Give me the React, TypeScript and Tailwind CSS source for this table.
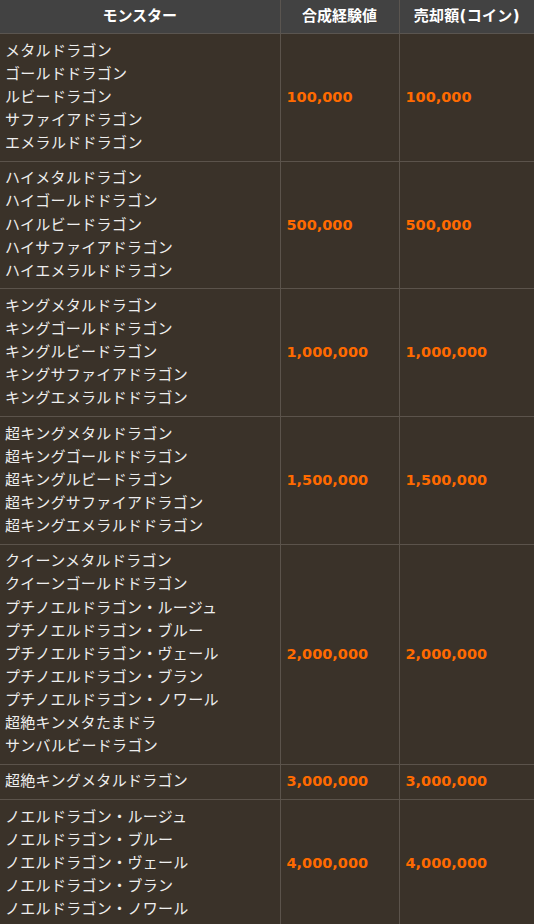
const rows: { names: string[]; exp: string; coin: string }[] = [
  {
    names: ['メタルドラゴン', 'ゴールドドラゴン', 'ルビードラゴン', 'サファイアドラゴン', 'エメラルドドラゴン'],
    exp: '100,000',
    coin: '100,000',
  },
  {
    names: ['ハイメタルドラゴン', 'ハイゴールドドラゴン', 'ハイルビードラゴン', 'ハイサファイアドラゴン', 'ハイエメラルドドラゴン'],
    exp: '500,000',
    coin: '500,000',
  },
  {
    names: ['キングメタルドラゴン', 'キングゴールドドラゴン', 'キングルビードラゴン', 'キングサファイアドラゴン', 'キングエメラルドドラゴン'],
    exp: '1,000,000',
    coin: '1,000,000',
  },
  {
    names: ['超キングメタルドラゴン', '超キングゴールドドラゴン', '超キングルビードラゴン', '超キングサファイアドラゴン', '超キングエメラルドドラゴン'],
    exp: '1,500,000',
    coin: '1,500,000',
  },
  {
    names: [
      'クイーンメタルドラゴン',
      'クイーンゴールドドラゴン',
      'プチノエルドラゴン・ルージュ',
      'プチノエルドラゴン・ブルー',
      'プチノエルドラゴン・ヴェール',
      'プチノエルドラゴン・ブラン',
      'プチノエルドラゴン・ノワール',
      '超絶キンメタたまドラ',
      'サンバルビードラゴン',
    ],
    exp: '2,000,000',
    coin: '2,000,000',
  },
  {
    names: ['超絶キングメタルドラゴン'],
    exp: '3,000,000',
    coin: '3,000,000',
  },
  {
    names: ['ノエルドラゴン・ルージュ', 'ノエルドラゴン・ブルー', 'ノエルドラゴン・ヴェール', 'ノエルドラゴン・ブラン', 'ノエルドラゴン・ノワール'],
    exp: '4,000,000',
    coin: '4,000,000',
  },
];

export default function App() {
  return (
    <div
      className="w-[534px] min-h-[924px] bg-[#3a3229] text-[#eeeeee] text-[15px] leading-[23.1px]"
      style={{ fontFamily: '"DejaVu Sans", "Noto Sans CJK JP", sans-serif' }}
    >
      <table className="w-full border-collapse table-fixed">
        <colgroup>
          <col className="w-[280px]" />
          <col className="w-[119px]" />
          <col />
        </colgroup>
        <thead>
          <tr className="bg-[#424242] text-white font-bold">
            <th className="py-[5px] px-[5px] text-center border-b border-[#5a5550]">モンスター</th>
            <th className="py-[5px] px-0 text-center border-l border-b border-[#5a5550] whitespace-nowrap">合成経験値</th>
            <th className="py-[5px] px-0 text-center border-l border-b border-[#5a5550] whitespace-nowrap tracking-[0.3px]">売却額(コイン)</th>
          </tr>
        </thead>
        <tbody>
          {rows.map((row, i) => (
            <tr key={i} className="border-b border-[#5b534b]">
              <td className="py-[5.6px] px-[5px] align-middle tracking-[0.3px]">
                {row.names.map((name) => (
                  <div key={name}>{name}</div>
                ))}
              </td>
              <td className="py-[5.6px] px-[6px] align-middle border-l border-[#5b534b] text-[#ff6a00] font-bold text-[14.5px]">
                {row.exp}
              </td>
              <td className="py-[5.6px] px-[6px] align-middle border-l border-[#5b534b] text-[#ff6a00] font-bold text-[14.5px]">
                {row.coin}
              </td>
            </tr>
          ))}
        </tbody>
      </table>
    </div>
  );
}
